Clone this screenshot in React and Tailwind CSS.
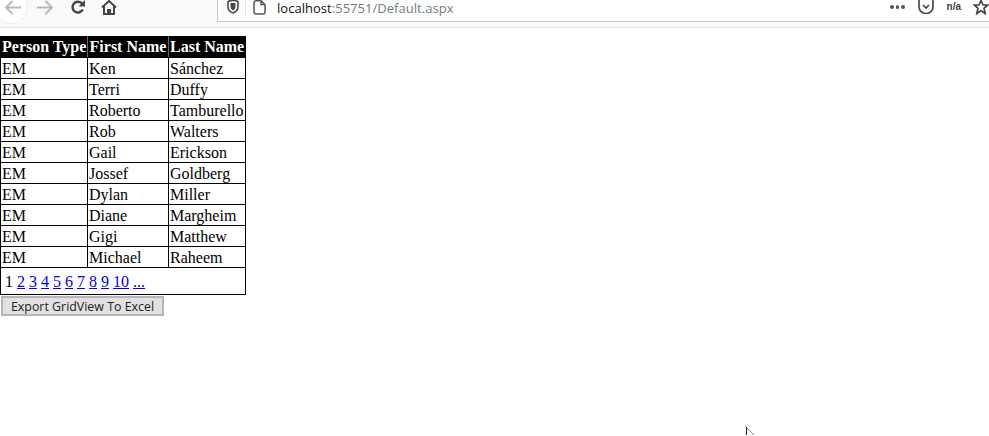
const rows = [
  ["EM", "Ken", "Sánchez"],
  ["EM", "Terri", "Duffy"],
  ["EM", "Roberto", "Tamburello"],
  ["EM", "Rob", "Walters"],
  ["EM", "Gail", "Erickson"],
  ["EM", "Jossef", "Goldberg"],
  ["EM", "Dylan", "Miller"],
  ["EM", "Diane", "Margheim"],
  ["EM", "Gigi", "Matthew"],
  ["EM", "Michael", "Raheem"],
];
const pages = ["2", "3", "4", "5", "6", "7", "8", "9", "10", "..."];

function Toolbar() {
  return (
    <header className="h-[28px] flex items-start overflow-hidden border-b border-[#e2e2e2] bg-[#fafafa]">
      <div className="w-[217px] h-[26px] relative shrink-0">
        <div className="absolute left-[-6px] top-[-10px] w-[34px] h-[34px] rounded-full border border-[#ececec] bg-white" />
        <svg className="absolute left-[4px] top-0" width="18" height="16" viewBox="0 0 18 16" fill="none" stroke="#b9b9b9" strokeWidth="2">
          <path d="M17 7.500H2M8.500 1L2 7.500L8.500 14" />
        </svg>
        <svg className="absolute left-[36px] top-0" width="18" height="16" viewBox="0 0 18 16" fill="none" stroke="#b9b9b9" strokeWidth="2">
          <path d="M1 7.500H16M9.500 1L16 7.500L9.500 14" />
        </svg>
        <svg className="absolute left-[70px] top-0" width="16" height="15" viewBox="0 0 16 15" fill="none" stroke="#444" strokeWidth="2.400">
          <path d="M12.800 9.500A5.400 5.400 0 1 1 11.500 3L13 4.500" />
          <path d="M15 0V6.500H8.500" fill="#444" stroke="none" />
        </svg>
        <svg className="absolute left-[101px] top-0" width="16" height="15" viewBox="0 0 16 15" fill="none" stroke="#444" strokeWidth="2">
          <path d="M1 7.500L8 1L15 7.500M3 6V14H13V6" />
          <path d="M6 9H10V14H6Z" fill="#444" stroke="none" />
        </svg>
      </div>
      <div className="flex-1 h-[22px] flex items-start bg-white border-l border-b border-[#c4c4c4]">
        <svg className="ml-[9px] shrink-0" width="12" height="14" viewBox="0 0 12 14" fill="none" stroke="#4a4a4a" strokeWidth="1.600">
          <path d="M1 1.500Q6 -0.500 11 1.500V7Q11 11 6 13Q1 11 1 7Z" />
          <path d="M3.500 3H8.500V7Q8.500 9 6 10.500Q3.500 9 3.500 7Z" fill="#4a4a4a" stroke="none" />
        </svg>
        <div className="ml-[6px] w-px h-[15px] bg-[#e4e4e4] shrink-0" />
        <svg className="ml-[7px] shrink-0" width="13" height="15" viewBox="0 0 13 15" fill="none" stroke="#555" strokeWidth="1.500">
          <path d="M3 .750H8L12 4.500V12A2 2 0 0 1 10 14H3A2 2 0 0 1 1 12V2.750A2 2 0 0 1 3 .750ZM8 .750V4.500H12" />
        </svg>
        <span className="ml-[11px] font-['Open_Sans',sans-serif] text-[13px] tracking-[0.03px] leading-[16px] whitespace-nowrap text-[#111]">
          localhost<span className="text-[#6f7d80]">:55751/Default.aspx</span>
        </span>
        <div className="ml-auto flex items-start shrink-0">
          <div className="mt-[5px] flex gap-[2px]">
            <span className="w-[3.500px] h-[3.500px] rounded-full bg-[#555]" />
            <span className="w-[3.500px] h-[3.500px] rounded-full bg-[#555]" />
            <span className="w-[3.500px] h-[3.500px] rounded-full bg-[#555]" />
          </div>
          <svg className="ml-[13px]" width="16" height="14" viewBox="0 0 16 14" fill="none" stroke="#4a4a4a" strokeWidth="1.700">
            <path d="M1 0V7A7 6.500 0 0 0 15 7V0" />
            <path d="M5 5L8 8L11 5" />
          </svg>
          <span className="ml-[13px] mt-[1px] font-['Liberation_Sans',sans-serif] font-bold text-[10px] leading-[12px] text-[#444]">n/a</span>
          <svg className="ml-[12px] mt-[-1px]" width="16" height="16" viewBox="0 0 16 16" fill="none" stroke="#444" strokeWidth="1.700">
            <path d="M8 1.500L10 6H14.800L11 9.300L12.200 14.500L8 11.800L3.800 14.500L5 9.300L1.200 6H6Z" />
          </svg>
        </div>
      </div>
    </header>
  );
}

export default function App() {
  return (
    <div className="relative w-[989px] h-[436px] overflow-hidden bg-white font-['Liberation_Serif',serif] text-black">
      <Toolbar />
      <table className="mt-[8px] w-[245px] table-fixed border-collapse border border-black text-[16px] leading-[18px]">
        <colgroup>
          <col className="w-[87px]" />
          <col className="w-[81px]" />
          <col className="w-[77px]" />
        </colgroup>
        <thead>
          <tr className="bg-black text-white">
            <th className="border border-black border-r-[#666] p-px font-bold whitespace-nowrap">Person Type</th>
            <th className="border border-black border-r-[#666] p-px font-bold whitespace-nowrap">First Name</th>
            <th className="border border-black p-px font-bold whitespace-nowrap">Last Name</th>
          </tr>
        </thead>
        <tbody>
          {rows.map((r) => (
            <tr key={r[1]}>
              {r.map((c, i) => (
                <td key={i} className="border border-black pt-[2px] pb-0 px-px text-left whitespace-nowrap">{c}</td>
              ))}
            </tr>
          ))}
          <tr>
            <td colSpan={3} className="border border-black p-px">
              <div className="flex gap-[4px] pt-[4px] pb-[2px] pl-[3px] pr-1">
                <span>1</span>
                {pages.map((p) => (
                  <a key={p} href="#" className="text-[#0000ee] underline">{p}</a>
                ))}
              </div>
            </td>
          </tr>
        </tbody>
      </table>
      <button className="block ml-px mt-px w-[163px] h-[20px] pt-px bg-[#e1e1e1] border-2 border-[#b5b5b5] font-['Open_Sans',sans-serif] text-[12.400px] leading-[16px] text-[#222] text-center whitespace-nowrap">
        Export GridView To Excel
      </button>
      <svg className="absolute left-[746px] top-[427px]" width="10" height="9" viewBox="0 0 10 9" fill="none">
        <path d="M.500 0V8" stroke="#222" />
        <path d="M1 1L8 8" stroke="#888" />
      </svg>
    </div>
  );
}
